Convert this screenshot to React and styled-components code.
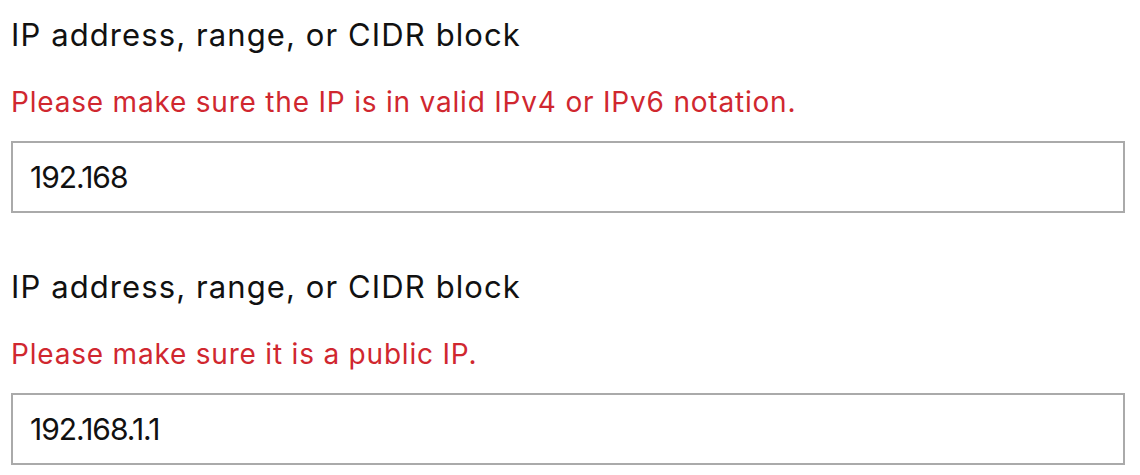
import React from 'react';
import styled, { createGlobalStyle } from 'styled-components';

const GlobalStyle = createGlobalStyle`
  html, body {
    margin: 0;
    padding: 0;
    background: #fff;
  }
  body {
    font-family: Inter, "Noto Sans", "Liberation Sans", sans-serif;
    color: #111;
  }
`;

const Form = styled.div`
  display: flex;
  flex-direction: column;
  gap: 53px;
  padding: 14px 15px 0 11px;
`;

const Field = styled.div`
  display: flex;
  flex-direction: column;
`;

const Label = styled.label`
  font-size: 31px;
  line-height: 42px;
  letter-spacing: 1.1px;
  color: #111;
`;

const ErrorText = styled.div`
  margin-top: 29px;
  font-size: 28px;
  line-height: 34px;
  letter-spacing: 0.8px;
  color: #d0272f;
`;

const Input = styled.input`
  box-sizing: border-box;
  margin-top: 22px;
  width: 100%;
  height: 72px;
  padding: 0 17px;
  border: 2px solid #aaa;
  border-radius: 0;
  outline: none;
  font-family: Inter, "Noto Sans", "Liberation Sans", sans-serif;
  font-size: 30px;
  letter-spacing: -1px;
  color: #111;
  background: #fff;
`;

const fields = [
  { value: '192.168', error: 'Please make sure the IP is in valid IPv4 or IPv6 notation.' },
  { value: '192.168.1.1', error: 'Please make sure it is a public IP.' },
];

export default function App() {
  return (
    <>
      <GlobalStyle />
      <Form>
        {fields.map((f, i) => (
          <Field key={i}>
            <Label>IP address, range, or CIDR block</Label>
            <ErrorText>{f.error}</ErrorText>
            <Input defaultValue={f.value} />
          </Field>
        ))}
      </Form>
    </>
  );
}
